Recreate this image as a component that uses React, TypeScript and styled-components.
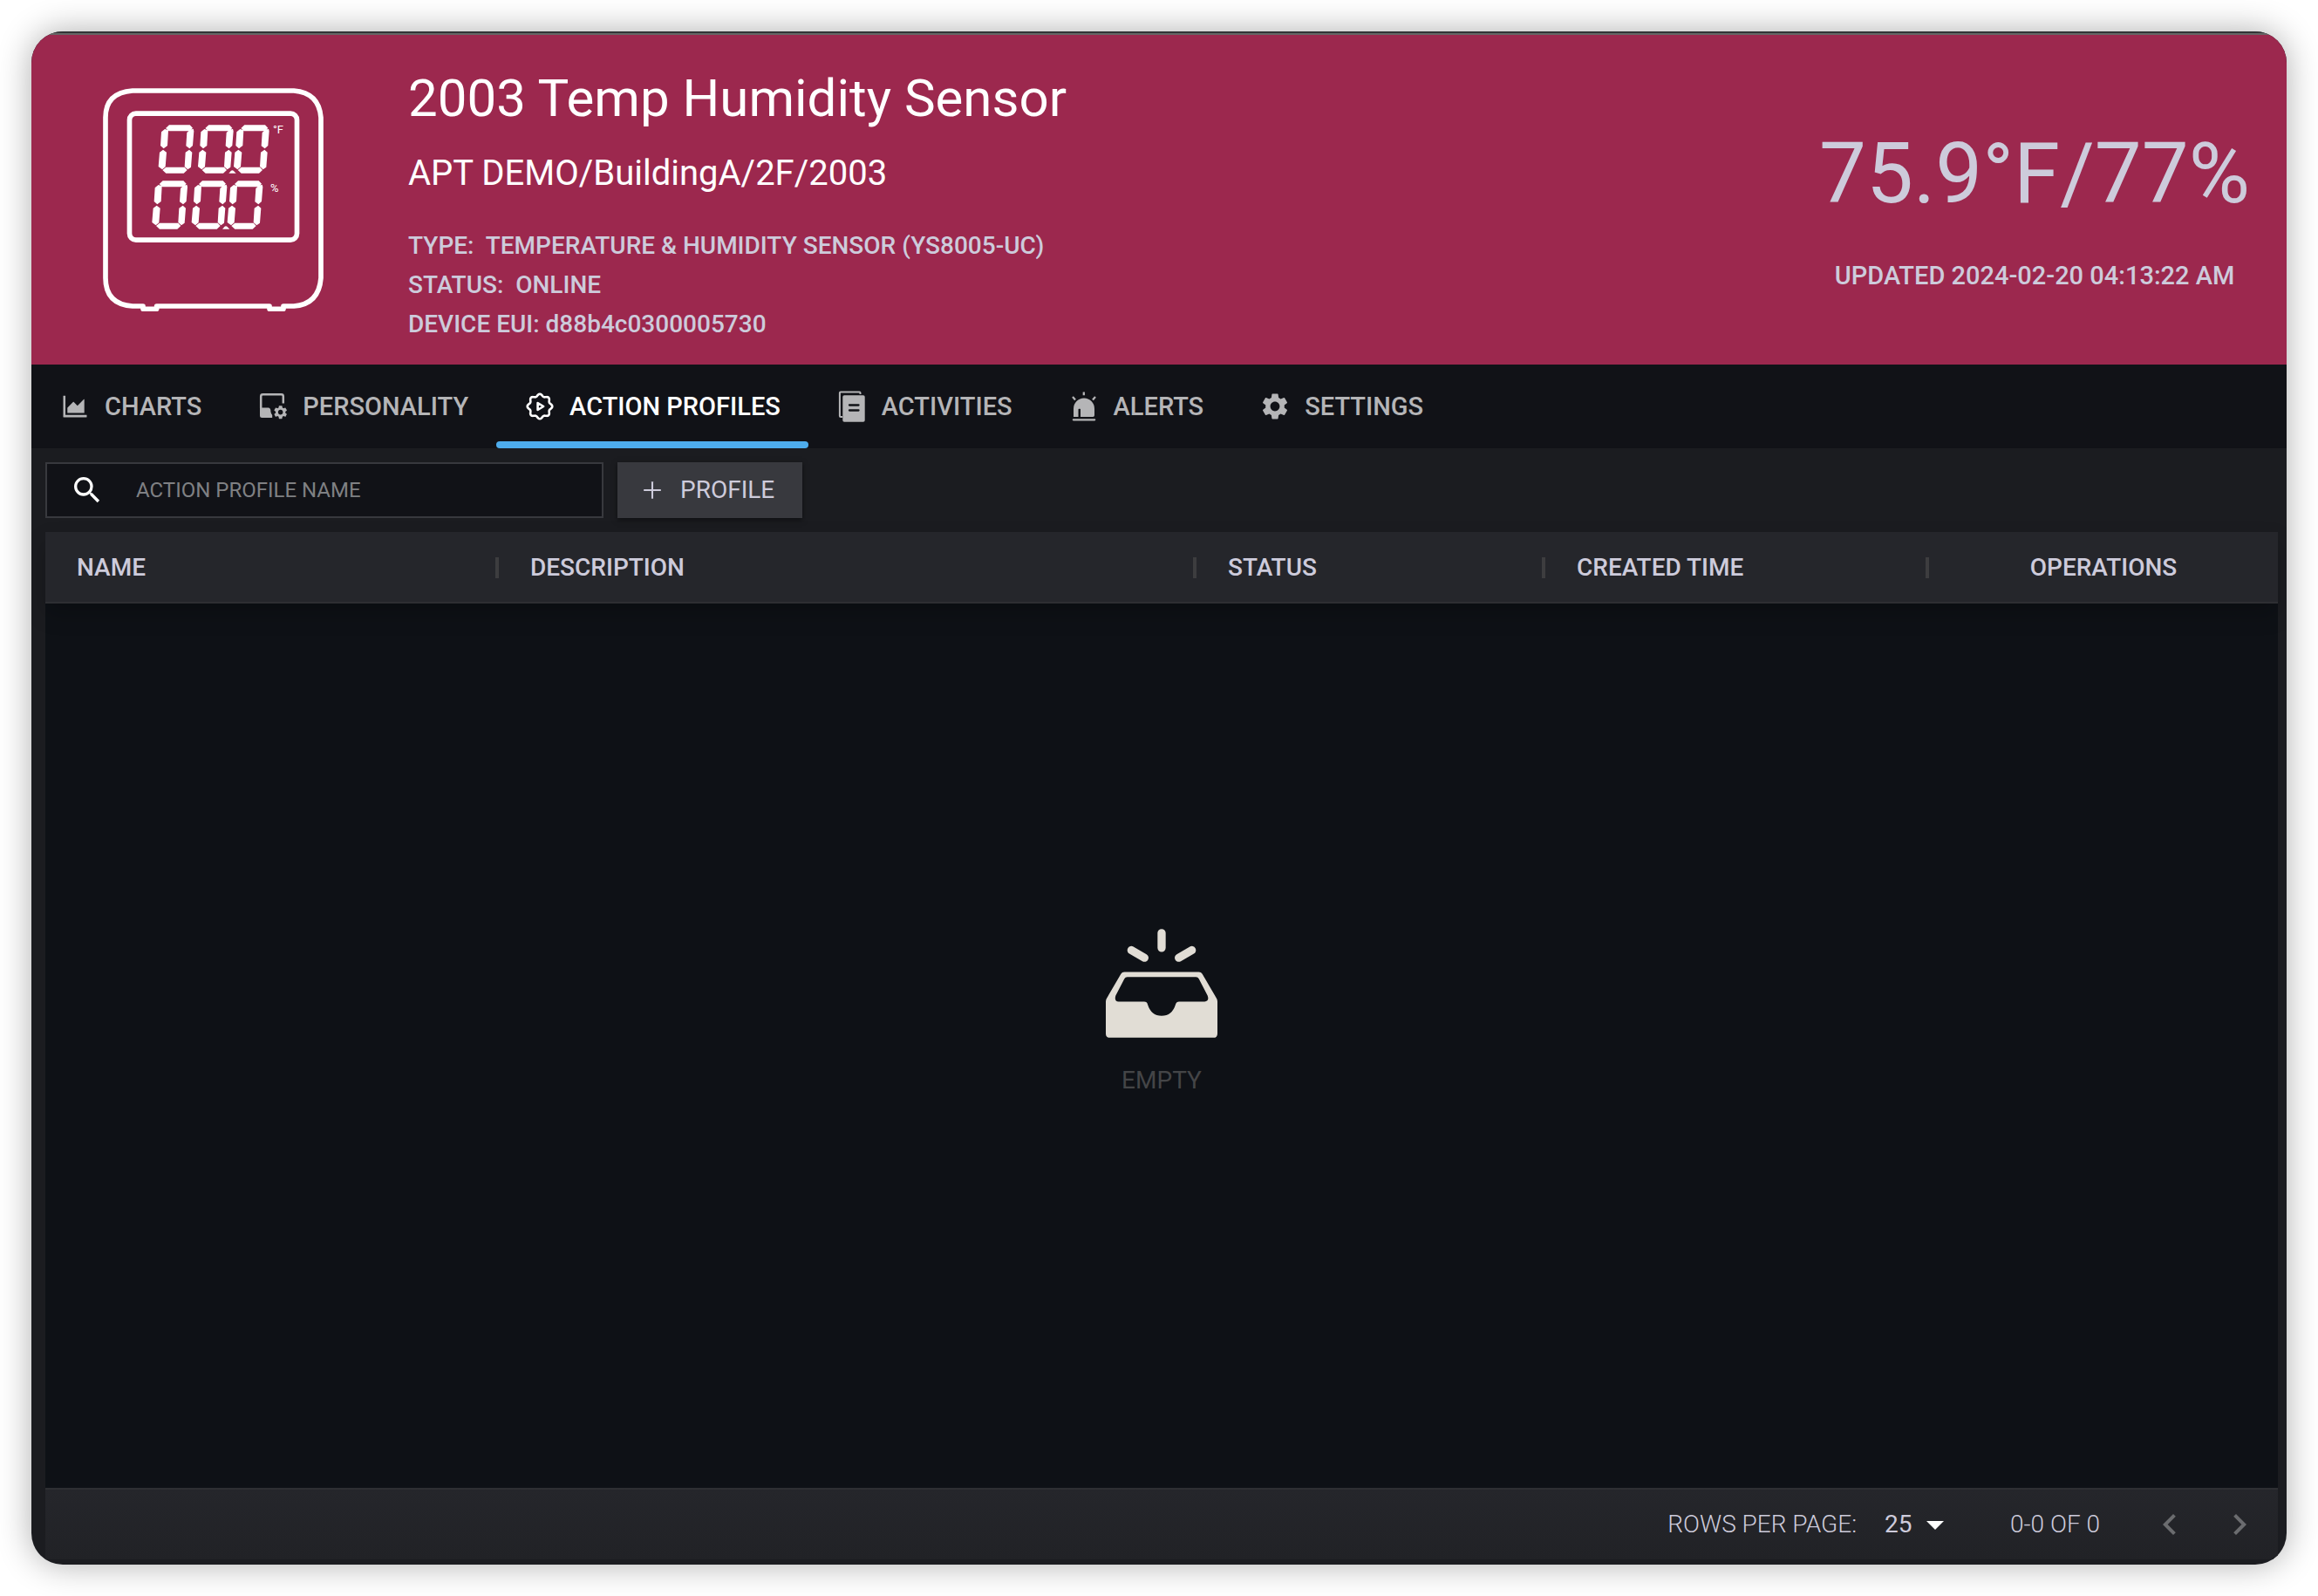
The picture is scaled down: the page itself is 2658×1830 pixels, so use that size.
import React from "react";
import styled, { createGlobalStyle } from "styled-components";
import { AiOutlineAreaChart, AiOutlinePlus } from "react-icons/ai";
import {
  MdArrowDropDown,
  MdChevronLeft,
  MdChevronRight,
  MdSearch,
  MdSettings,
} from "react-icons/md";

const color = {
  brand: "#9c284e",
  bar: "#111217",
  panel: "#1b1c20",
  raised: "#25262b",
  body: "#0e1116",
  line: "#2e2f33",
  control: "#38393e",
  text: "#cdcbdb",
  muted: "#b5b5b7",
  accent: "#4eacec",
};

const GlobalStyle = createGlobalStyle`
  * { box-sizing: border-box; }
  body {
    margin: 0;
    background: #fff;
    color: ${color.text};
    font-family: Roboto, "Liberation Sans", sans-serif;
    font-size: 28px;
    line-height: 46px;
  }
  button, input, select { font: inherit; color: inherit; }
`;

const Page = styled.div`
  display: flex;
  min-height: 100vh;
  padding: 36px;
`;

const Window = styled.main`
  flex: 1;
  min-width: 0;
  display: flex;
  flex-direction: column;
  overflow: hidden;
  border-radius: 36px;
  background: ${color.panel};
  box-shadow: 0 0 38px rgba(0, 0, 0, 0.32);
`;

const TopEdge = styled.div`
  height: 4px;
  border-top: 2px solid #333436;
  background: #656565;
`;

const Header = styled.header`
  display: flex;
  align-items: flex-start;
  height: 378px;
  padding: 37px 42px 0 82px;
  background: ${color.brand};
`;

const Device = styled.svg`
  flex: none;
  width: 253px;
  height: 256px;
  margin: 24px 97px 0 0;
  fill: none;
  stroke: #fff;
  stroke-width: 17;
  stroke-linejoin: round;
  text {
    fill: #fff;
    stroke: none;
    font-weight: 400;
    font-size: 39px;
  }
`;

const Info = styled.div`
  flex: 1;
  min-width: 0;
`;

const Title = styled.h1`
  margin: 0 0 26px;
  color: #fff;
  font-size: 60px;
  line-height: 72px;
  font-weight: 400;
`;

const Location = styled.p`
  margin: 0 0 36px;
  color: #fff;
  font-size: 40px;
  line-height: 48px;
`;

const Detail = styled.p`
  margin: 0;
  font-weight: 500;
  line-height: 45px;
  white-space: pre;
`;

const Reading = styled.div`
  display: flex;
  flex-direction: column;
  align-items: center;
  gap: 38px;
  padding-top: 66px;
`;

const Value = styled.div`
  font-size: 96px;
  line-height: 112px;
`;

const Updated = styled.div`
  font-size: 29px;
  font-weight: 500;
`;

const Tabs = styled.nav`
  display: flex;
  height: 96px;
  background: ${color.bar};
`;

const Tab = styled.a<{ $active?: boolean }>`
  position: relative;
  display: flex;
  align-items: center;
  gap: 16px;
  padding: 0 32px;
  color: ${(p) => (p.$active ? "#fff" : color.muted)};
  font-size: 29px;
  font-weight: 500;
  text-decoration: none;
  white-space: nowrap;
  &::after {
    content: "";
    position: absolute;
    inset: auto 0 0 0;
    height: 8px;
    border-radius: 4px;
    background: ${(p) => (p.$active ? color.accent : "transparent")};
  }
  svg {
    flex: none;
    width: 36px;
    height: 36px;
  }
`;

const Toolbar = styled.form`
  display: flex;
  gap: 16px;
  padding: 16px;
`;

const SearchBox = styled.label`
  display: flex;
  align-items: center;
  gap: 36px;
  width: 640px;
  height: 64px;
  padding: 0 26px;
  border: 2px solid ${color.control};
  background: ${color.bar};
  color: #fff;
  svg {
    flex: none;
    width: 40px;
    height: 40px;
  }
`;

const SearchInput = styled.input`
  flex: 1;
  min-width: 0;
  padding: 0;
  border: 0;
  outline: 0;
  background: transparent;
  font-size: 24px;
  line-height: 32px;
  &::placeholder {
    color: #7f8083;
    opacity: 1;
  }
`;

const AddButton = styled.button`
  display: flex;
  align-items: center;
  gap: 18px;
  height: 64px;
  padding: 0 32px 0 26px;
  border: 0;
  background: ${color.control};
  box-shadow: 0 2px 6px rgba(0, 0, 0, 0.5);
`;

const TablePanel = styled.section`
  flex: 1;
  display: flex;
  flex-direction: column;
  margin: 0 10px 6px 16px;
  background: ${color.body};
`;

const Table = styled.table`
  width: 100%;
  table-layout: fixed;
  border-collapse: separate;
  border-spacing: 0;
  box-shadow: 0 12px 24px rgba(0, 0, 0, 0.2);
`;

const HeadCell = styled.th<{ $center?: boolean }>`
  height: 82px;
  padding: 2px 0 0 ${(p) => (p.$center ? 0 : 36)}px;
  border-bottom: 2px solid ${color.line};
  background: ${color.raised};
  font-weight: 500;
  text-align: ${(p) => (p.$center ? "center" : "left")};
`;

const HeadLabel = styled.span`
  display: flex;
  align-items: center;
  justify-content: space-between;
  &::after {
    content: "";
    width: 4px;
    height: 24px;
    background: #3d3d3f;
  }
`;

const Empty = styled.div`
  flex: 1;
  display: flex;
  flex-direction: column;
  align-items: center;
  justify-content: center;
  gap: 26px;
  padding-bottom: 72px;
  color: #444547;
  svg {
    width: 128px;
    height: 125px;
  }
`;

const Footer = styled.footer`
  display: flex;
  align-items: center;
  height: 82px;
  padding-right: 20px;
  justify-content: flex-end;
  border-top: 2px solid ${color.line};
  background: linear-gradient(${color.raised}, #212226);
  font-weight: 300;
`;

const RowsSelect = styled.span`
  position: relative;
  display: flex;
  align-items: center;
  margin: 0 62px 0 32px;
  svg {
    position: absolute;
    right: 0;
    width: 48px;
    height: 48px;
    color: #fff;
    pointer-events: none;
  }
`;

const Select = styled.select`
  appearance: none;
  width: 82px;
  height: 46px;
  padding: 0;
  border: 0;
  background: transparent;
  font-weight: 400;
`;

const Pager = styled.div`
  display: flex;
  gap: 32px;
  margin-left: 56px;
`;

const PagerButton = styled.button`
  display: flex;
  padding: 0;
  border: 0;
  background: none;
  color: #6b6c6f;
  svg {
    width: 48px;
    height: 48px;
  }
`;

const SEGMENTS = [
  "M569 440L581 429H652L662 439L652 450H580Z",
  "M566 443L578 447L575 500L562 510L551 500L554 453Z",
  "M653 446L664 442L666 450L662 500L651 510L639 501L642 455Z",
  "M560 514L572 523L568 573L557 582L544 572L548 523Z",
  "M650 514L660 523L656 574L645 582L634 572L637 523Z",
  "M558 584L570 574H634L643 584L631 595H570Z",
];

const Digits = ({ dx, dy }: { dx: number; dy: number }) => (
  <g transform={`translate(${dx} ${dy})`} fill="#fff" stroke="none">
    {[0, 136, 259].map((x) => (
      <path key={x} transform={`translate(${x} 0)`} d={SEGMENTS.join("")} />
    ))}
    <path d="M786 595L794 586Q798 583 802 586L811 595Z" />
  </g>
);

const SensorDrawing = () => (
  <Device viewBox="353 302 759 768" aria-hidden="true">
    <path d="M455 1052Q362 1045 362 955V403Q362 318 455 311H1010Q1096 318 1103 403V955Q1096 1045 1010 1052H974V1062H926V1052H538V1062H491V1052Z" />
    <rect x="444.5" y="389.5" width="576" height="435" rx="22" />
    <Digits dx={0} dy={0} />
    <Digits dx={-22} dy={192} />
    <text x="938" y="457">°F</text>
    <text x="929" y="659">%</text>
  </Device>
);

const scallop = Array.from({ length: 96 }, (_, i) => {
  const a = (i / 96) * Math.PI * 2;
  const r = 13 + 1.3 * Math.cos(8 * a);
  return `${(18 + r * Math.sin(a)).toFixed(2)} ${(18 - r * Math.cos(a)).toFixed(2)}`;
}).join("L");

const ActionIcon = () => (
  <svg viewBox="0 0 36 36" fill="none" stroke="currentColor" strokeWidth="2.6" strokeLinejoin="round" aria-hidden="true">
    <path d={`M${scallop}Z`} />
    <path d="M15.6 14V22L22.2 18Z" />
  </svg>
);

const PersonalityIcon = () => (
  <svg viewBox="0 0 36 36" aria-hidden="true">
    <path
      d="M4.2 20V6.4Q4.2 4.2 6.4 4.2H27.6Q29.8 4.2 29.8 6.4V14.5"
      fill="none"
      stroke="currentColor"
      strokeWidth="2.5"
    />
    <path d="M3 19.5H13Q15.6 20.2 15.4 24Q15.8 26.5 17.2 28V31H5.5Q3 31 3 28.5Z" fill="currentColor" />
    <g transform="translate(17.3 15.3) scale(.78)">
      <MdSettings size={24} style={{ width: 24, height: 24 }} />
    </g>
  </svg>
);

const ActivitiesIcon = () => (
  <svg viewBox="0 0 36 36" aria-hidden="true">
    <path d="M7 30H5Q3.9 30 3.9 29V2.6Q3.9 1.6 5 1.6H26.5Q27.5 1.6 27.5 2.6V4" fill="none" stroke="currentColor" strokeWidth="2" />
    <rect x="7.3" y="5.3" width="25.4" height="30.4" rx="1.8" fill="currentColor" />
    <path d="M15 16.5H25.5M15 22.5H25.5" stroke={color.bar} strokeWidth="2.3" strokeLinecap="round" />
  </svg>
);

const AlertIcon = () => (
  <svg viewBox="0 0 36 36" aria-hidden="true">
    <path d="M6 30V20.7a12 12.2 0 0 1 24 0V28.2Q30 30 28.2 30H14V21.5Q14 20.8 13.3 20.8H12.2Q11.5 20.8 11.5 21.5V30Z" fill="currentColor" />
    <path d="M5.8 33.3H30.2" stroke="currentColor" strokeWidth="2.2" strokeLinecap="round" />
    <path d="M17.8 1.4V5.2M5 7L8 10.4M31 7L28 10.4" stroke="currentColor" strokeWidth="2.3" />
  </svg>
);

const EmptyIcon = () => (
  <svg viewBox="0 0 384 374" fill="#e1ddd5" aria-hidden="true">
    <path
      fillRule="evenodd"
      d="M64 148H320Q328 148 332 155L381 239Q384 244 384 250V360Q384 374 370 374H14Q0 374 0 360V250Q0 244 3 239L52 155Q56 148 64 148ZM74 165Q67 165 64 171L34 229Q28 250 44 250H132Q142 250 144 260Q156 299 192 299Q228 299 240 260Q243 250 252 250H340Q357 249 350 229L320 171Q317 165 310 165Z"
    />
    <path d="M192 14V65M88 73L133 99M296 73L251 99" stroke="#e1ddd5" strokeWidth="28" strokeLinecap="round" />
  </svg>
);

const TABS = [
  { label: "CHARTS", icon: <AiOutlineAreaChart /> },
  { label: "PERSONALITY", icon: <PersonalityIcon /> },
  { label: "ACTION PROFILES", icon: <ActionIcon />, active: true },
  { label: "ACTIVITIES", icon: <ActivitiesIcon /> },
  { label: "ALERTS", icon: <AlertIcon /> },
  { label: "SETTINGS", icon: <MdSettings /> },
];

const COLUMNS = [
  { label: "NAME", width: 520 },
  { label: "DESCRIPTION", width: 800 },
  { label: "STATUS", width: 400 },
  { label: "CREATED TIME", width: 440 },
];

export default function App() {
  return (
    <>
      <GlobalStyle />
      <Page>
        <Window>
          <TopEdge />
          <Header>
            <SensorDrawing />
            <Info>
              <Title>2003 Temp Humidity Sensor</Title>
              <Location>APT DEMO/BuildingA/2F/2003</Location>
              <Detail>{"TYPE:  TEMPERATURE & HUMIDITY SENSOR (YS8005-UC)"}</Detail>
              <Detail>{"STATUS:  ONLINE"}</Detail>
              <Detail>DEVICE EUI: d88b4c0300005730</Detail>
            </Info>
            <Reading>
              <Value>75.9°F/77%</Value>
              <Updated>UPDATED 2024-02-20 04:13:22 AM</Updated>
            </Reading>
          </Header>
          <Tabs>
            {TABS.map((t) => (
              <Tab key={t.label} href="#" $active={t.active} aria-current={t.active ? "page" : undefined}>
                {t.icon}
                {t.label}
              </Tab>
            ))}
          </Tabs>
          <Toolbar onSubmit={(e) => e.preventDefault()}>
            <SearchBox>
              <MdSearch />
              <SearchInput type="text" placeholder="ACTION PROFILE NAME" aria-label="Action profile name" />
            </SearchBox>
            <AddButton type="button">
              <AiOutlinePlus size={28} />
              PROFILE
            </AddButton>
          </Toolbar>
          <TablePanel>
            <Table>
              <colgroup>
                {COLUMNS.map((c) => (
                  <col key={c.label} width={c.width} />
                ))}
                <col width={400} />
              </colgroup>
              <thead>
                <tr>
                  {COLUMNS.map((c) => (
                    <HeadCell key={c.label} scope="col">
                      <HeadLabel>{c.label}</HeadLabel>
                    </HeadCell>
                  ))}
                  <HeadCell $center scope="col">OPERATIONS</HeadCell>
                </tr>
              </thead>
            </Table>
            <Empty>
              <EmptyIcon />
              EMPTY
            </Empty>
            <Footer>
              <label htmlFor="rows">ROWS PER PAGE:</label>
              <RowsSelect>
                <Select id="rows" defaultValue="25">
                  <option>25</option>
                  <option>50</option>
                  <option>100</option>
                </Select>
                <MdArrowDropDown />
              </RowsSelect>
              <span>0-0 OF 0</span>
              <Pager>
                <PagerButton type="button" aria-label="Previous page">
                  <MdChevronLeft />
                </PagerButton>
                <PagerButton type="button" aria-label="Next page">
                  <MdChevronRight />
                </PagerButton>
              </Pager>
            </Footer>
          </TablePanel>
        </Window>
      </Page>
    </>
  );
}
